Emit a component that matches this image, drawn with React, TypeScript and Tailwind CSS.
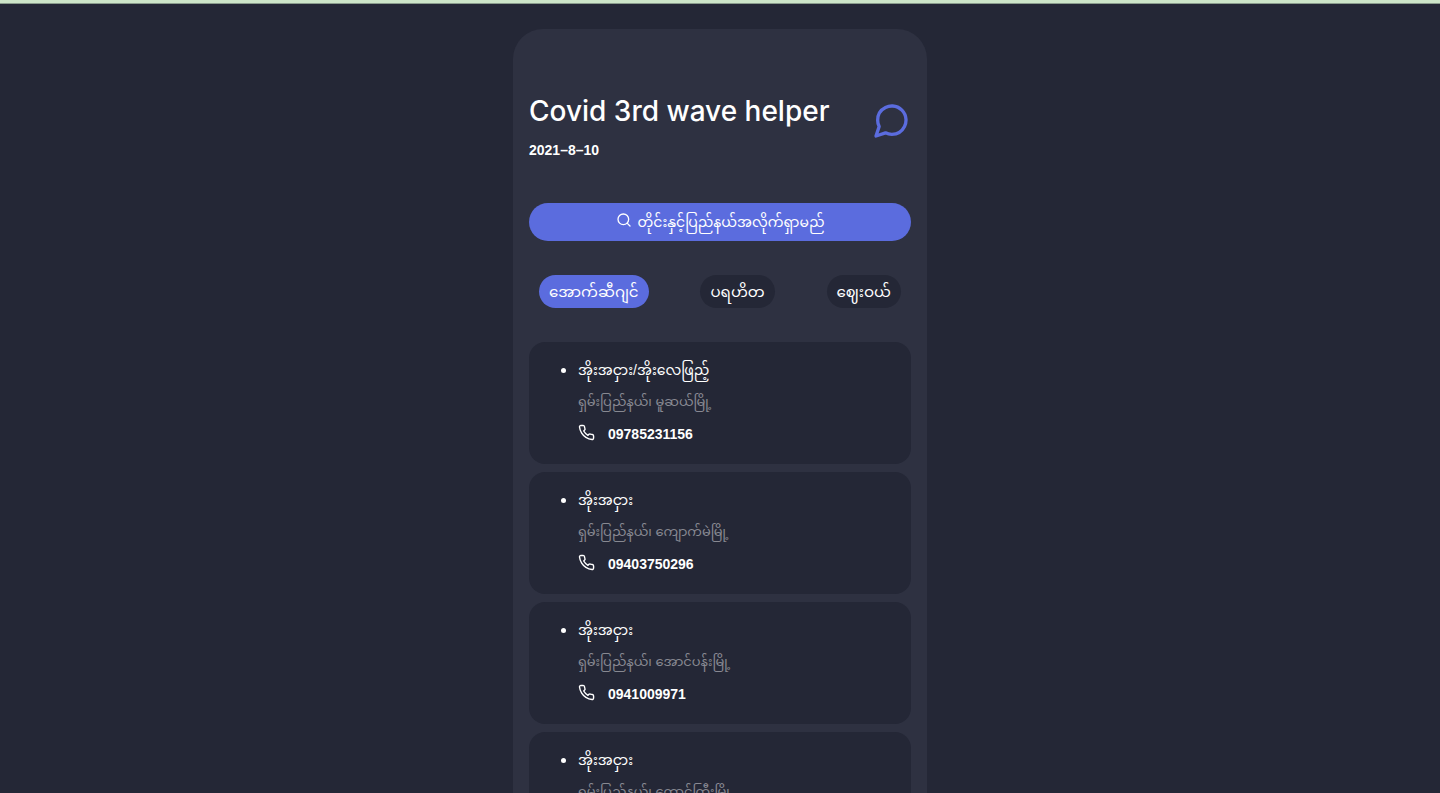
import { FiMessageCircle, FiPhone, FiSearch } from "react-icons/fi";

type Contact = { service: string; place: string; phone?: string };

const tabs = ["အောက်ဆီဂျင်", "ပရဟိတ", "ဈေးဝယ်"];

const contacts: Contact[] = [
  { service: "အိုးအငှား/အိုးလေဖြည့်", place: "ရှမ်းပြည်နယ်၊ မူဆယ်မြို့", phone: "09785231156" },
  { service: "အိုးအငှား", place: "ရှမ်းပြည်နယ်၊ ကျောက်မဲမြို့", phone: "09403750296" },
  { service: "အိုးအငှား", place: "ရှမ်းပြည်နယ်၊ အောင်ပန်းမြို့", phone: "0941009971" },
  { service: "အိုးအငှား", place: "ရှမ်းပြည်နယ်၊ တောင်ကြီးမြို့" },
];

function ContactCard({ service, place, phone }: Contact) {
  return (
    <li className="flex gap-3 rounded-2xl bg-[#242736] pt-3 pb-[14px] pl-8">
      <span className="mt-[14px] size-[5px] rounded-full bg-white" />
      <div>
        <p className="text-sm leading-8">{service}</p>
        <p className="text-[13px] leading-8 text-[#888992]">{place}</p>
        {phone && (
          <a href={`tel:${phone}`} className="flex h-8 items-center gap-[13px] text-sm font-bold">
            <FiPhone size={17} className="mb-1" />
            {phone}
          </a>
        )}
      </div>
    </li>
  );
}

export default function App() {
  return (
    <div className="h-screen overflow-y-auto bg-[#242736] font-['Liberation_Sans','Noto_Sans_Myanmar',sans-serif] text-white [scrollbar-width:none]">
      <div className="h-1 border-b border-[#8a9c8d] bg-[#cde5c9]" />
      <div className="px-4 pt-[25px]">
        <main className="mx-auto min-h-screen w-full max-w-[414px] rounded-t-[30px] bg-[#2e3141] px-4 pt-16 pb-8">
          <header className="flex items-start justify-between">
            <div>
              <h1 className="font-['Inter','Noto_Sans_Myanmar',sans-serif] text-[28px] leading-9 font-medium">
                Covid 3rd wave helper
              </h1>
              <p className="mt-2 text-sm leading-[26px] font-bold">2021–8–10</p>
            </div>
            <button aria-label="Messages" className="pt-2 text-[#5b6cde]">
              <FiMessageCircle size={40} />
            </button>
          </header>

          <button className="mt-10 flex h-[38px] w-full items-center justify-center gap-[6px] rounded-full bg-[#5b6cde] text-sm">
            <FiSearch size={16} className="mb-1" />
            <span>တိုင်းနှင့်ပြည်နယ်အလိုက်ရှာမည်</span>
          </button>

          <nav className="mt-[34px] flex justify-between px-[10px]">
            {tabs.map((tab, i) => (
              <button
                key={tab}
                className={
                  i === 0
                    ? "h-[33px] rounded-full bg-[#5b6cde] px-[10px] text-[15px] leading-8"
                    : "h-[33px] rounded-full bg-[#242736] px-[10px] text-[15px] leading-8"
                }
              >
                {tab}
              </button>
            ))}
          </nav>

          <ul className="mt-[34px] flex flex-col gap-2">
            {contacts.map((contact) => (
              <ContactCard key={contact.place} {...contact} />
            ))}
          </ul>
        </main>
      </div>
    </div>
  );
}
